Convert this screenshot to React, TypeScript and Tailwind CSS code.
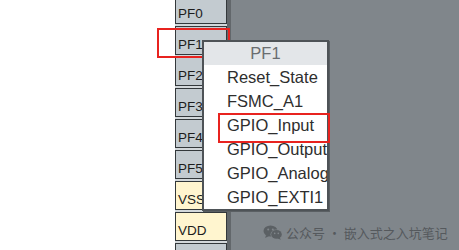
import React from "react";

const pins = [
  { name: "PF0", power: false },
  { name: "PF1", power: false },
  { name: "PF2", power: false },
  { name: "PF3", power: false },
  { name: "PF4", power: false },
  { name: "PF5", power: false },
  { name: "VSS", power: true },
  { name: "VDD", power: true },
  { name: "", power: false },
];

const modes = ["Reset_State", "FSMC_A1", "GPIO_Input", "GPIO_Output", "GPIO_Analog", "GPIO_EXTI1"];

function WeChatIcon() {
  return (
    <svg width="20" height="15" viewBox="0 0 20 15">
      <ellipse cx="7.5" cy="6" rx="7" ry="5.6" fill="#5b6064" />
      <path d="M3 10 L2.2 13 L6 11 Z" fill="#5b6064" />
      <circle cx="5.2" cy="4.6" r="1" fill="#80868b" />
      <circle cx="9.8" cy="4.6" r="1" fill="#80868b" />
      <ellipse cx="13.5" cy="9.4" rx="6" ry="4.8" fill="#80868b" />
      <ellipse cx="13.5" cy="9.4" rx="5.3" ry="4.3" fill="#5b6064" />
      <path d="M16.5 12.5 L18 14.8 L14.5 13.4 Z" fill="#5b6064" />
      <circle cx="11.7" cy="8.4" r="0.8" fill="#80868b" />
      <circle cx="15.3" cy="8.4" r="0.8" fill="#80868b" />
    </svg>
  );
}

export default function App() {
  return (
    <div className="relative w-[459px] h-[250px] overflow-hidden bg-white flex font-['Liberation_Sans',Arial,sans-serif]">
      {/* left blank area */}
      <div className="w-[175px] shrink-0" />

      {/* pin column */}
      <div className="w-[52px] shrink-0 flex flex-col gap-[2px] mt-[-5px] bg-[#d3d8db]">
        {pins.map((p, i) => (
          <div
            key={i}
            className={`h-[29px] shrink-0 border-[1.5px] border-[#33383b] flex items-end pl-[2px] pb-[2px] overflow-hidden ${p.power ? "bg-[#fff5cf]" : "bg-[#c3cbd0]"}`}
          >
            <span className="text-[13.5px] leading-[15px] text-[#1c1c1c] whitespace-nowrap">{p.name}</span>
          </div>
        ))}
      </div>

      {/* chip body */}
      <div className="flex-1 bg-[#80868b] border-l-[4px] border-[#62676b]" />

      {/* red highlight around PF1 */}
      <div className="absolute left-[157px] top-[28px] w-[73px] h-[30px] border-[2.5px] border-[#e8231f]" />

      {/* popup menu */}
      <div className="absolute left-[202px] top-[40px] w-[127px] border-2 border-[#4e5357] bg-white shadow-[1px_1px_0_#5a5f63]">
        <div className="h-[23px] bg-[#e3e6e9] flex items-center justify-center text-[16.5px] text-[#6a6d70]">PF1</div>
        {modes.map((m) => (
          <div key={m} className="h-[24px] flex items-center pl-[23px] text-[16.5px] text-[#2e2e2e] whitespace-nowrap overflow-hidden">
            {m}
          </div>
        ))}
      </div>

      {/* red highlight around GPIO_Input */}
      <div className="absolute left-[218px] top-[113px] w-[112px] h-[30px] border-[2.5px] border-[#e8231f]" />

      {/* watermark */}
      <div className="absolute left-[263px] top-[223px] flex items-center gap-[3px] text-[13px] text-[#55595d] font-['Noto_Sans_CJK_SC',sans-serif]">
        <WeChatIcon />
        <span className="whitespace-nowrap">公众号 · 嵌入式之入坑笔记</span>
      </div>
    </div>
  );
}
